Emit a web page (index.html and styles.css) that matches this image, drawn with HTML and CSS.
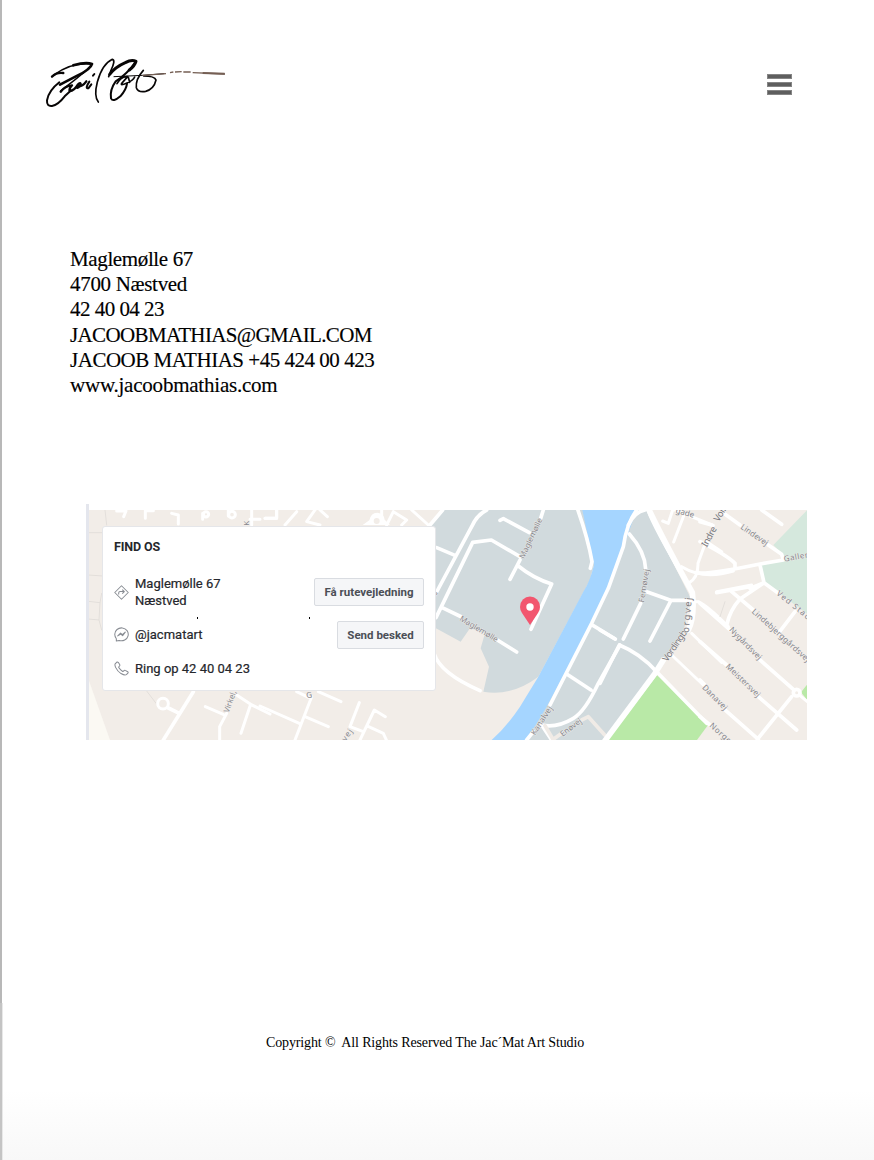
FILE: index.html
```html
<!DOCTYPE html>
<html lang="da">
<head>
<meta charset="utf-8">
<title>Jac´Mat Art Studio</title>
<link rel="stylesheet" href="styles.css">
</head>
<body>
<div class="page">
  <header class="header">
    <svg class="logo" viewBox="0 0 600 198" role="img" aria-label="Jac Mat">
      <g class="ink">
        <path stroke-width="7" d="M48 80Q62 66 82 69"/>
        <path stroke-width="5" d="M54 75Q105 36 166 42"/>
        <path stroke-width="8" d="M112 46Q150 35 168 42Q164 58 124 77L72 104"/>
        <path stroke-width="4" d="M168 42Q150 66 74 122"/>
        <path stroke-width="6" d="M70 97Q38 122 33 151Q32 170 48 168Q66 165 86 139L104 122"/>
        <path stroke-width="7" d="M74 125Q87 108 108 106Q98 118 101 123Q115 122 126 103Q137 94 133 107Q121 119 122 109Q137 113 151 94"/>
        <path stroke-width="6" d="M160 95Q146 116 157 115L166 103M171 77l4-5"/>
        <path stroke-width="5" d="M187 156Q173 139 184 96Q199 42 229 28Q240 30 224 63"/>
        <path stroke-width="9" d="M221 73Q238 51 268 38Q287 27 300 34Q296 48 280 60"/>
        <path stroke-width="6" d="M300 34Q274 72 239 94Q221 119 225 145Q231 158 253 139Q271 119 273 101"/>
        <path stroke-width="5" d="M224 64L218 80M243 101Q256 77 275 80L259 98Q249 109 273 99Q291 92 296 81M277 82l4 15"/>
        <path stroke-width="5" d="M322 61Q298 88 301 113Q306 128 329 124Q354 117 360 90Q356 78 323 78"/>
      </g>
      <path class="ink" stroke-width="3" d="M234 80L320 76L384 71"/>
      <path class="ink tail" stroke-width="4" d="M320 76L390 71M402 68l10-2M417 66l20-1M442 66l22 0M470 68L567 72"/>
      <path class="ink tail" stroke-width="6" d="M500 69L566 71"/>
    </svg>
    <button class="menu" aria-label="Menu"><i></i><i></i><i></i></button>
  </header>

  <address class="contact">
    <div class="l1">Maglemølle 67</div>
    <div class="l2">4700 Næstved</div>
    <div class="l3">42 40 04 23</div>
    <div class="l4">JACOOBMATHIAS@GMAIL.COM</div>
    <div class="l5">JACOOB MATHIAS +45 424 00 423</div>
    <div class="l6">www.jacoobmathias.com</div>
  </address>

  <section class="find">
    <svg class="map" viewBox="86 504 721 236">
      <defs><clipPath id="frame"><rect x="86" y="510" width="721" height="230"/></clipPath></defs>
      <g clip-path="url(#frame)">
        <rect class="land" x="86" y="510" width="721" height="230"/>
        <!-- districts, water and parks -->
        <g transform="translate(430 500) scale(.33333)">
          <path class="zone" d="M35 30H460L492 195L480 240L325 530Q245 590 160 575L177 500L152 445L165 400L120 385L92 425L0 375V75Z"/>
          <path class="zone" d="M605 30H650L780 290L760 400L680 520L530 720H290L485 370Z"/>
          <path class="water" d="M457 30L492 195Q480 245 460 275L325 530L270 620Q230 680 185 720H290L350 620L485 370L540 265L595 100L620 30Z"/>
        </g>
        <path class="cream" d="M88 678L110 740H88Z"/>
        <path class="green" d="M657 675L708 725L697 740H608Z"/>
        <g transform="translate(700 500) scale(.33333)">
          <path class="park" d="M322 30L220 135L250 165V182L185 194L191 245L322 342Z"/>
          <path class="green" d="M323 552L303 577L323 602Z"/>
        </g>
        <!-- western streets -->
        <g class="road" transform="translate(80 500) scale(.33333)">
          <path class="faint" d="M75 30L80 75M25 98H68M25 225L68 228M25 304L60 308L57 360L25 357M60 308L65 280M57 360L65 390M200 573L232 615"/>
          <path class="mid" d="M110 33H138L131 50M196 55V32H220M275 40L295 45V72M368 58V40M445 30V48M515 30V75M510 58H540M555 55H590V30"/>
          <circle class="mid" cx="378" cy="43" r="8"/><circle class="mid" cx="456" cy="44" r="10"/>
          <circle class="mid" cx="249" cy="611" r="16"/>
          <path d="M265 624L298 640M340 575L250 720"/>
          <path class="mid" d="M376 620L430 643M440 640L419 680V722M470 585L512 613L483 700M512 613L570 642"/>
        </g>
        <g class="road" transform="translate(260 500) scale(.33333)">
          <path class="mid" d="M15 55H50V30M75 75L110 35M180 30L202 50M180 75L140 65L165 30M365 30V55M380 75L400 35L440 60L425 75M455 30L505 75"/>
          <path class="disc" d="M308 75L328 61Q332 39 352 38Q372 40 374 59L390 75Z"/>
          <circle class="dot" cx="350" cy="63" r="9"/>
          <path class="mid" d="M0 618L118 670M155 590L105 720M135 650L205 680M110 575L152 595M175 575L243 605M298 608L270 680L310 695M300 720L343 630L376 650M326 680L370 700L380 722"/>
        </g>
        <!-- harbour streets -->
        <g class="road" transform="translate(430 500) scale(.33333)">
          <path d="M0 75L38 30M170 30Q140 45 125 80L15 285M20 143L75 166M18 353L128 127L184 120L270 170M210 61L220 56L298 98M340 30L332 55M270 180L240 238M265 198Q310 235 365 252L303 388M35 322L95 351M202 420L260 456M12 460Q30 520 150 572M443 28Q475 120 486 185L481 205"/>
          <path d="M620 30Q590 70 580 140L535 265L485 370L360 615M290 720L310 695M485 374L556 417M410 522L483 570M570 435L505 550Q465 635 430 655Q380 685 335 675M335 675L365 720"/>
          <path class="warm" d="M345 677L370 720M370 718L395 700M455 660L475 650L524 705"/>
        </g>
        <!-- eastern streets -->
        <g class="road" transform="translate(600 500) scale(.33333)">
          <path d="M143 25Q155 70 265 255M135 30Q105 35 85 75M88 102Q135 155 137 207M122 310L70 417M140 275L212 301H265M212 303L150 423M0 390L45 417M0 550L58 435Q120 460 170 515M170 515L320 670"/>
          <path class="major" d="M145 25Q190 120 277 278Q285 350 265 390M190 480L165 520L15 722"/>
          <path class="mid" d="M188 63L205 70L218 30M252 45L221 126M225 30L340 76M245 200Q310 240 400 213M265 250Q295 235 294 190L312 140M320 125L365 155M215 465L310 555M275 400L365 487M265 305H295Q320 315 385 380M350 275L455 255"/>
        </g>
        <g class="road" transform="translate(700 500) scale(.33333)">
          <path d="M-12 218Q20 225 180 192L250 180L245 163L205 135M180 195L192 248M65 35L120 75M185 30L245 73M0 125Q80 165 105 190V205M0 65L35 75M50 278L150 260M150 265L192 248L235 280M190 250L120 297Q90 330 80 375M95 275L160 330M0 310L90 390M180 480L280 568M0 425L80 495M175 590L290 690M275 590L172 718M75 630L175 718M0 540L15 555M0 650L30 675M285 335L235 400"/>
          <circle cx="290" cy="578" r="10"/><path class="mid" d="M300 587L322 605"/>
          <path class="faint" d="M75 305L60 350"/>
        </g>
        <!-- street names -->
        <g class="label" transform="translate(430 500) scale(.33333)">
          <text transform="translate(282 178) rotate(-65)" textLength="132">Maglemølle</text>
          <text transform="translate(87 360) rotate(31)" textLength="130">Maglemølle</text>
          <text transform="translate(315 707) rotate(-57)" textLength="98">Kanalvej</text>
          <text transform="translate(398 711) rotate(-37)" textLength="74">Enøvej</text>
          <text transform="translate(16 288) rotate(-40)">s</text>
        </g>
        <g class="label" transform="translate(600 500) scale(.33333)">
          <text transform="translate(132 308) rotate(-81)" textLength="101">Femøvej</text>
          <text class="big" transform="translate(202 487) rotate(-56)"  textLength="108">Vordingb</text>
          <text class="big" transform="translate(266 399) rotate(-85)" textLength="106">orgvej</text>
          <text transform="translate(226 38) rotate(16)" textLength="56">gade</text>
          <text class="big" transform="translate(320 143) rotate(-61)" textLength="65">Indre</text>
          <text class="big" transform="translate(356 67) rotate(-59)" textLength="45">Vor.</text>
        </g>
        <g class="label" transform="translate(700 500) scale(.33333)">
          <text transform="translate(120 85) rotate(34)" textLength="94">Lindevej</text>
          <text transform="translate(253 185) rotate(-10)" textLength="86">Gallem</text>
          <text transform="translate(228 283) rotate(39)" textLength="132">Ved Stadi</text>
          <text transform="translate(154 337) rotate(42)" textLength="224">Lindebjerggårdsvej</text>
          <text transform="translate(86 391) rotate(45)" textLength="127">Nygårdsvej</text>
          <text transform="translate(76 501) rotate(44)" textLength="133">Meistersvej</text>
          <text transform="translate(5 564) rotate(45)" textLength="96">Danavej</text>
          <text transform="translate(27 679) rotate(42)" textLength="92">Norges</text>
        </g>
        <g class="label" transform="translate(80 500) scale(.33333)">
          <text transform="translate(446 640) rotate(-70)" textLength="69">Virkel,</text>
          <text transform="translate(507 77) rotate(-90)">K</text>
          <text transform="translate(622 566) rotate(40)">s</text>
          <text transform="translate(680 595) rotate(-10)">G</text>
          <text transform="translate(797 725) rotate(-55)" textLength="38">vej</text>
        </g>
        <path class="pinShape" d="M530 625L522 613Q520 610 520 607A10 10.500 0 0 1 540 607Q540 610 538 613Z"/>
        <circle cx="530" cy="607" r="3.700" fill="#fff"/>
      </g>
      <path class="edge" d="M87.500 504V740"/>
    </svg>

    <div class="card">
      <h2>FIND OS</h2>
      <div class="row place">
        <svg class="icon" viewBox="0 0 16 16"><path d="M8 .8L15.200 8L8 15.200L.8 8ZM5 10V8.500Q5 7 6.500 7H10.500M8.800 4.900L11 7L8.800 9.200"/></svg>
        <p>Maglemølle 67<br>Næstved</p>
        <button class="btn wide">Få rutevejledning</button>
      </div>
      <div class="row message">
        <svg class="icon" viewBox="0 0 16 16"><path d="M2.500 12.500Q.8 10.500 .8 7.800A7.200 6.900 0 1 1 5.500 14.300L2.500 15ZM4 9.500L7 6.400L8.900 8.200L12 5.500L9.200 9.200L7.200 7.500Z"/></svg>
        <p>@jacmatart</p>
        <button class="btn">Send besked</button>
      </div>
      <div class="row call">
        <svg class="icon" viewBox="0 0 16 16"><path d="M1.200 3.100L3.100 1.100Q4 .7 4.700 1.700L6.200 4.100Q6.500 5 5.500 5.800Q4.700 6.400 5.300 7.300Q6.700 9.600 8.900 10.900Q9.800 11.400 10.400 10.500Q11.200 9.500 12 10L14.600 11.500Q15.500 12.200 14.800 13L13.200 14.600Q11.500 15.800 7.500 13.400Q3.500 10.700 1.700 6.800Q.6 4.300 1.200 3.100Z"/></svg>
        <p>Ring op 42 40 04 23</p>
      </div>
      <i class="speck first"></i><i class="speck second"></i>
    </div>
  </section>

  <footer class="footer">Copyright ©&nbsp; All Rights Reserved The Jac´Mat Art Studio</footer>
</div>
</body>
</html>
```
FILE: styles.css
```css
* { box-sizing: border-box; }
body { margin: 0; background: #fff; }
p, h2 { margin: 0; }
button { font: inherit; }

.page {
  height: 1160px;
  overflow: hidden;
  background:
    linear-gradient(90deg, #b8b8b8 2px, transparent 2px) 0 0 / 100% 1003px no-repeat,
    linear-gradient(90deg, #c4c4c4 2px, #e8e8e8 2px, #e8e8e8 3px, transparent 3px) 0 1003px / 100% 157px no-repeat,
    linear-gradient(#fff 1090px, #f8f8f8 1160px);
}

.header {
  display: flex;
  justify-content: space-between;
  align-items: flex-start;
  height: 247px;
  padding: 50px 82px 0 36px;
}
.logo { width: 200px; height: 66px; }
.ink { fill: none; stroke: #080606; stroke-linecap: round; stroke-linejoin: round; }
.tail { stroke: #755f54; stroke-linecap: butt; }
.menu {
  display: grid;
  gap: 3px;
  width: 25px;
  margin-top: 24px;
  padding: 0;
  border: 0;
  background: none;
}
.menu i { height: 5px; background: #5e5e5e; border: 1px solid #858585; }

.contact {
  height: 257px;
  padding-left: 70px;
  font: 21px/25.200px "Liberation Serif", serif;
  color: #000;
  white-space: nowrap;
  -webkit-text-stroke: .15px #000;
}
.l1 { letter-spacing: -.37px; }
.l2 { letter-spacing: -.31px; }
.l3 { letter-spacing: -.52px; }
.l4 { letter-spacing: -.63px; }
.l5 { letter-spacing: -.48px; }
.l6 { letter-spacing: -.22px; }

.find { position: relative; width: 721px; height: 236px; margin-left: 86px; }
.map { display: block; width: 721px; height: 236px; }
.land { fill: #f2ede8; }
.zone { fill: #d1dadd; }
.water { fill: #a5d5ff; }
.park { fill: #d5e8dd; }
.green { fill: #b9e9a7; }
.cream { fill: #fbf9f3; }
.road { fill: none; stroke: #fff; stroke-width: 11; stroke-linecap: round; stroke-linejoin: round; }
.road .mid { stroke-width: 9; }
.road .major { stroke-width: 17; }
.road .faint { stroke: #e3dfdb; stroke-width: 3; }
.road .warm { stroke: #f0ebe6; }
.road .disc { fill: #fff; stroke: none; }
.road .dot { fill: #f2ede8; stroke: none; }
.label { fill: #85858b; font: 24px "Noto Sans", sans-serif; }
.label .big { font-size: 28px; fill: #77777d; }
.label text { paint-order: stroke; stroke: #f4f1ee; stroke-width: 2px; }
.pinShape { fill: #f2566f; }
.edge { stroke: #e4e6ed; stroke-width: 3; }

.card {
  position: absolute;
  left: 16px;
  top: 22px;
  width: 334px;
  height: 165px;
  padding: 11px 11px 0;
  background: #fff;
  border: 1px solid #e5e6e9;
  border-radius: 3px;
  font: 13px/17px Roboto, sans-serif;
  color: #25272c;
  -webkit-text-stroke: .2px #25272c;
}
.card h2 { height: 37px; font: 700 12.500px/17px Roboto, sans-serif; letter-spacing: -.1px; -webkit-text-stroke: 0; }
.row { display: flex; align-items: center; }
.row p { flex: 1; margin-left: 6px; }
.icon { width: 15px; height: 15px; fill: none; stroke: #888c93; stroke-width: 1.100; stroke-linejoin: round; }
.place { height: 34px; }
.message { height: 51px; }
.call { height: 16px; }
.btn {
  width: 87px;
  height: 28px;
  padding: 0;
  border: 1px solid #d9dce1;
  border-radius: 2px;
  background: #f5f6f8;
  color: #4b4f56;
  font: 700 11.500px/20px Roboto, sans-serif;
  -webkit-text-stroke: 0;
}
.btn.wide { width: 110px; }
.speck { position: absolute; top: 90px; width: 1px; height: 2px; background: #000; }
.first { left: 94px; }
.second { left: 206px; }

.footer {
  padding: 293px 0 0 266px;
  font: 14px/20px "Liberation Serif", serif;
  letter-spacing: -.14px;
  color: #000;
  white-space: nowrap;
}
```
